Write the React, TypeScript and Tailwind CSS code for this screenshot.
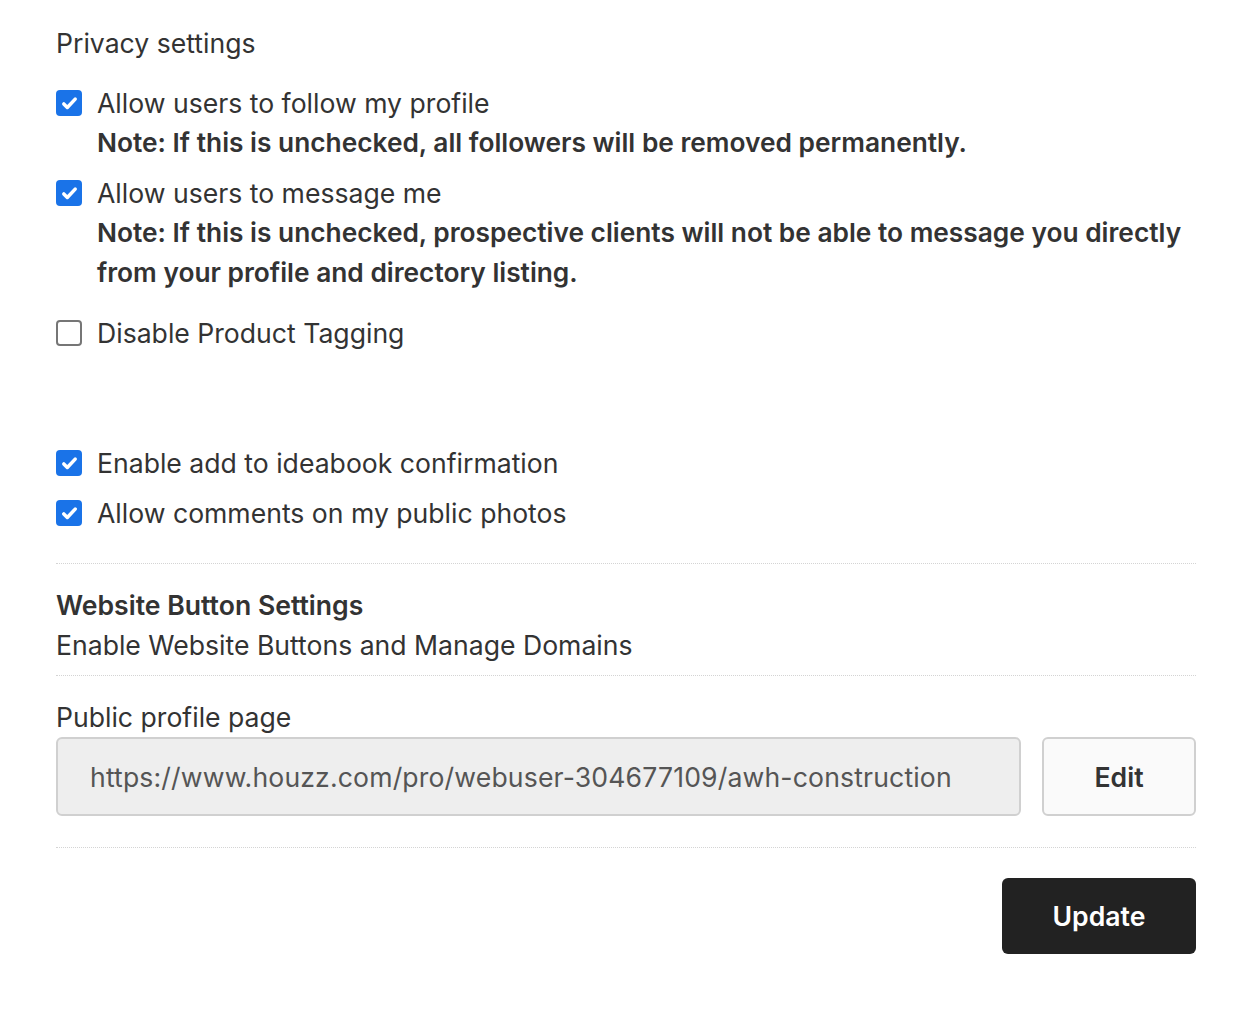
import React from 'react';

type Opt = { label: string; checked: boolean; note?: string };

const Check: React.FC<{ checked: boolean }> = ({ checked }) =>
  checked ? (
    <span className="flex h-[26px] w-[26px] shrink-0 items-center justify-center rounded-[4px] bg-[#1a73e8]">
      <svg viewBox="0 0 24 24" className="h-[21px] w-[21px]" fill="none" stroke="#fff" strokeWidth="4" strokeLinecap="round" strokeLinejoin="round">
        <path d="M5.5 12.5l4 4L18.5 7" />
      </svg>
    </span>
  ) : (
    <span className="h-[26px] w-[26px] shrink-0 rounded-[4px] border-2 border-[#767676] bg-white" />
  );

const Row: React.FC<Opt> = ({ label, checked, note }) => (
  <label className="flex gap-[15px]">
    <div className="flex h-[40px] items-center">
      <Check checked={checked} />
    </div>
    <div>
      <div>{label}</div>
      {note && <div className="text-[26.3px] font-semibold">{note}</div>}
    </div>
  </label>
);

export default function App() {
  const privacy: Opt[] = [
    { label: 'Allow users to follow my profile', checked: true, note: 'Note: If this is unchecked, all followers will be removed permanently.' },
    {
      label: 'Allow users to message me',
      checked: true,
      note: 'Note: If this is unchecked, prospective clients will not be able to message you directly from your profile and directory listing.',
    },
  ];

  return (
    <div className="min-h-[1010px] bg-white font-['Inter',sans-serif] text-[26.6px] leading-[40px] text-[#333]">
      <div className="ml-[56px] w-[1140px] pt-[23px]">
        <div>Privacy settings</div>

        <div className="mt-[20px] flex flex-col gap-[10px]">
          {privacy.map((o) => (
            <Row key={o.label} {...o} />
          ))}
        </div>

        <div className="mt-[20px]">
          <Row label="Disable Product Tagging" checked={false} />
        </div>

        <div className="mt-[90px] flex flex-col gap-[10px]">
          <Row label="Enable add to ideabook confirmation" checked />
          <Row label="Allow comments on my public photos" checked />
        </div>

        <div className="mt-[30px] border-t border-dotted border-[#d4d4d4]" />

        <div className="pt-[21px]">
          <div className="font-semibold">Website Button Settings</div>
          <div>Enable Website Buttons and Manage Domains</div>
        </div>

        <div className="mt-[10px] border-t border-dotted border-[#d4d4d4]" />

        <div className="pt-[21px]">
          <div>Public profile page</div>
          <div className="flex gap-[21px]">
            <div className="flex h-[79px] flex-1 items-center rounded-[6px] border-2 border-[#d0d0d0] bg-[#eeeeee] px-[32px] tracking-[0.15px] text-[#555]">
              https://www.houzz.com/pro/webuser-304677109/awh-construction
            </div>
            <button className="h-[79px] w-[154px] rounded-[6px] border-2 border-[#d0d0d0] bg-[#fafafa] font-semibold text-[#333]">
              Edit
            </button>
          </div>
        </div>

        <div className="mt-[31px] border-t border-dotted border-[#d4d4d4]" />

        <div className="flex justify-end pt-[30px]">
          <button className="h-[76px] w-[194px] rounded-[6px] bg-[#222] font-semibold text-white">Update</button>
        </div>
      </div>
    </div>
  );
}
